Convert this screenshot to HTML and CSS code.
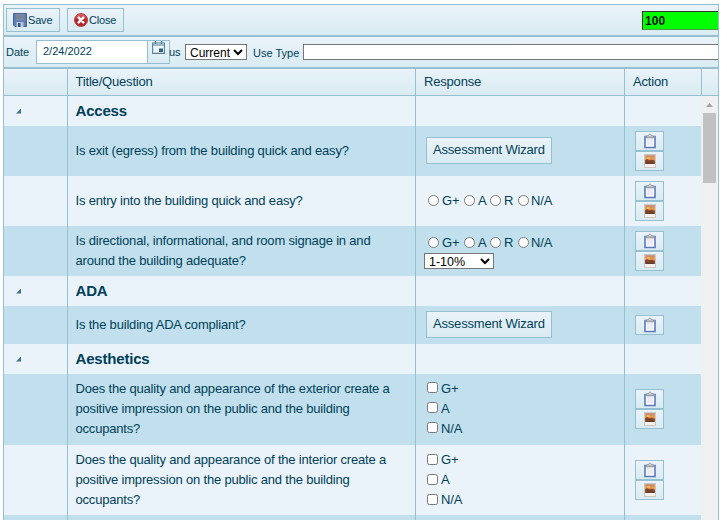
FILE: index.html
```html
<!DOCTYPE html>
<html lang="en">
<head>
<meta charset="utf-8">
<title>Assessment</title>
<link rel="stylesheet" href="styles.css">
</head>
<body>
<svg width="0" height="0" class="defs" aria-hidden="true">
  <defs>
    <linearGradient id="sky" x1="0" y1="0" x2="0" y2="1">
      <stop offset="0" stop-color="#b9836a"/><stop offset=".45" stop-color="#f39a45"/><stop offset=".6" stop-color="#b8642f"/><stop offset="1" stop-color="#543229"/>
    </linearGradient>
    <linearGradient id="red" x1="0" y1="0" x2="0" y2="1">
      <stop offset="0" stop-color="#df6a6a"/><stop offset=".5" stop-color="#bf2228"/><stop offset="1" stop-color="#b3262b"/>
    </linearGradient>
  </defs>
  <symbol id="clip" viewBox="0 0 12 16">
    <path d="M1 3.500h10v11H1z" fill="#fafaff" stroke="#5d79bd" stroke-width="1.600"/>
    <path d="M1.500 3.400h9" stroke="#9aa5bd" stroke-width="1.200"/>
    <path d="M3 7h6M3 9h6M3 11h6" stroke="#dcd8ea" stroke-width=".9"/>
    <path d="M2.500 5V3.200L4.500 2.400Q5 1 6 1t1.500 1.400L9.500 3.200V5z" fill="#b3b9ba" stroke="#8c9395" stroke-width=".7"/>
    <circle cx="6" cy="2.400" r=".7" fill="#eef3f5"/>
  </symbol>
  <symbol id="photo" viewBox="0 0 12 14">
    <rect x=".5" y=".5" width="11" height="13" fill="#f6efec" stroke="#c9c6c4"/>
    <rect x="1.200" y="1.200" width="9.600" height="8.800" fill="url(#sky)"/>
    <path d="M1.200 6l2-1 2 1.500 2-.8 3.600 1.300v1.500H1.200z" fill="#6b3a28" opacity=".7"/>
    <path d="M3 4h3" stroke="#ffd071"/>
  </symbol>
</svg>
<div class="panel">
  <div class="bar tools">
    <button class="btn save"><svg width="14" height="14" viewBox="0 0 14 14"><path d="M.5.5h13v13H2L.5 12z" fill="#5f7eb9" stroke="#45619b"/><path d="M3 1h8v6H3z" fill="#86919f"/><path d="M3 3h8M3 5h8" stroke="#6c7889"/><path d="M3.500 9h7v5h-7z" fill="#b9c5d5"/><path d="M5 10h2.500v4H5z" fill="#3c5689"/></svg>Save</button>
    <button class="btn close"><svg width="14" height="14" viewBox="0 0 14 14"><circle cx="7" cy="7" r="6.500" fill="url(#red)" stroke="#b5474b"/><path d="M4.700 4.700l4.600 4.600m0-4.600l-4.600 4.600" stroke="#fff" stroke-width="2.500" stroke-linecap="round"/></svg>Close</button>
    <div class="score">100</div>
  </div>
  <div class="bar filters">
    <span class="lbl date-lbl">Date</span>
    <div class="date"><span class="date-val">2/24/2022</span><span class="date-ico"><svg width="13" height="13" viewBox="0 0 13 13"><path d="M.6 2h11.800v10.400H.6z" fill="#edf5f9" stroke="#56809a" stroke-width="1.100"/><path d="M0 4h13" stroke="#56809a"/><path d="M3.500 0v3M9.500 0v3" stroke="#56809a" stroke-width="1.400"/><path d="M7 7.500h4v3.500H7z" fill="#2f6280"/></svg></span></div>
    <span class="lbl us">us</span>
    <select class="sel current"><option>Current</option></select>
    <span class="lbl use">Use Type</span>
    <div class="usebox"></div>
  </div>
  <div class="row head"><div class="c"></div><div class="c">Title/Question</div><div class="c">Response</div><div class="c">Action</div><div class="h-end"></div></div>
  <div class="body">
    <div class="rows">
      <div class="row group"><div class="c"><i class="tri"></i></div><div class="c">Access</div><div class="c"></div><div class="c"></div></div>
      <div class="row dark h50"><div class="c"></div><div class="c">Is exit (egress) from the building quick and easy?</div><div class="c"><button class="btn wiz">Assessment Wizard</button></div><div class="c act"><span class="ib"><svg width="12" height="16"><use href="#clip"/></svg></span><span class="ib"><svg width="12" height="14"><use href="#photo"/></svg></span></div></div>
      <div class="row h50"><div class="c"></div><div class="c">Is entry into the building quick and easy?</div><div class="c"><div class="radios"><label class="r1"><input type="radio">G+</label><label class="r2"><input type="radio">A</label><label class="r3"><input type="radio">R</label><label class="r4"><input type="radio">N/A</label></div></div><div class="c act"><span class="ib"><svg width="12" height="16"><use href="#clip"/></svg></span><span class="ib"><svg width="12" height="14"><use href="#photo"/></svg></span></div></div>
      <div class="row dark h50"><div class="c"></div><div class="c">Is directional, informational, and room signage in and<br>around the building adequate?</div><div class="c"><div class="radios"><label class="r1"><input type="radio">G+</label><label class="r2"><input type="radio">A</label><label class="r3"><input type="radio">R</label><label class="r4"><input type="radio">N/A</label></div><select class="sel pct"><option>1-10%</option></select></div><div class="c act"><span class="ib"><svg width="12" height="16"><use href="#clip"/></svg></span><span class="ib"><svg width="12" height="14"><use href="#photo"/></svg></span></div></div>
      <div class="row group"><div class="c"><i class="tri"></i></div><div class="c">ADA</div><div class="c"></div><div class="c"></div></div>
      <div class="row dark h38"><div class="c"></div><div class="c">Is the building ADA compliant?</div><div class="c"><button class="btn wiz">Assessment Wizard</button></div><div class="c act"><span class="ib"><svg width="12" height="16"><use href="#clip"/></svg></span></div></div>
      <div class="row group"><div class="c"><i class="tri"></i></div><div class="c">Aesthetics</div><div class="c"></div><div class="c"></div></div>
      <div class="row dark h71"><div class="c"></div><div class="c">Does the quality and appearance of the exterior create a<br>positive impression on the public and the building<br>occupants?</div><div class="c"><div class="checks"><label><input type="checkbox">G+</label><label><input type="checkbox">A</label><label><input type="checkbox">N/A</label></div></div><div class="c act"><span class="ib"><svg width="12" height="16"><use href="#clip"/></svg></span><span class="ib"><svg width="12" height="14"><use href="#photo"/></svg></span></div></div>
      <div class="row h70"><div class="c"></div><div class="c">Does the quality and appearance of the interior create a<br>positive impression on the public and the building<br>occupants?</div><div class="c"><div class="checks"><label><input type="checkbox">G+</label><label><input type="checkbox">A</label><label><input type="checkbox">N/A</label></div></div><div class="c act"><span class="ib"><svg width="12" height="16"><use href="#clip"/></svg></span><span class="ib"><svg width="12" height="14"><use href="#photo"/></svg></span></div></div>
      <div class="row dark last"><div class="c"></div><div class="c"></div><div class="c"></div><div class="c"></div></div>
    </div>
    <div class="scroll"><i class="up"></i><div class="thumb"></div></div>
  </div>
</div>
</body>
</html>
```
FILE: styles.css
```css
* { box-sizing: border-box; }
body { margin: 0; height: 520px; overflow: hidden; background: #fff; color: #003f59; font: 13px/20px "Liberation Sans", Arial, sans-serif; letter-spacing: -.185px; }
.defs { position: absolute; }
.panel { margin: 4px 0 0 3px; width: 716px; height: 516px; border: 1px solid #94c0d2; border-bottom: 0; }
.bar { display: flex; overflow: hidden; background: linear-gradient(#eaf3f9, #d9ebf2); border-bottom: 2px solid #94c0d2; }
.tools { height: 32px; padding: 3px 0 0 2px; }
.filters { height: 32px; padding-top: 3px; }
.btn { display: flex; align-items: center; margin: 0; padding: 0; border: 1px solid #94c0d2; background: linear-gradient(#eaf3f9, #d9ebf2); color: #003f59; font: 11px/22px "Liberation Sans", Arial, sans-serif; letter-spacing: -.185px; white-space: nowrap; }
.save, .close { height: 24px; }
.save { width: 54px; padding-left: 6px; gap: 1px; }
.close { width: 57px; margin-left: 7px; padding-left: 6px; gap: 1px; }
.score { margin: 3px 0 0 auto; width: 76px; height: 19px; padding-left: 2px; background: #0f0; border: 1px solid #333; border-right: 0; border-bottom-color: #4c9a4c; color: #111; font-weight: bold; font-size: 12px; line-height: 18px; letter-spacing: .1px; }
.lbl { font-size: 11px; line-height: 24px; white-space: nowrap; letter-spacing: 0; }
.date-lbl { width: 32px; padding-left: 2px; flex: none; }
.date { display: flex; width: 134px; height: 24px; flex: none; border: 1px solid #94c0d2; background: #fff; }
.date-val { width: 110px; padding-left: 6px; font-size: 11px; line-height: 21px; letter-spacing: 0; }
.date-ico { width: 22px; border-left: 1px solid #94c0d2; background: linear-gradient(#eaf3f9, #d9ebf2); padding-left: 4px; line-height: 0; }
.us { width: 16px; margin-left: -1px; }
.sel { margin: 0; padding: 0; border: 1px solid #767676; border-radius: 0; background: #fff; color: #000; height: 16px; font: 12px "Liberation Sans", Arial, sans-serif; letter-spacing: 0; }
.current { width: 62px; margin-top: 4px; flex: none; }
.use { width: 56px; padding-left: 6px; line-height: 26px; }
.usebox { flex: 1; height: 16px; margin-top: 4px; background: #fff; border: 1px solid #767676; border-right: 0; }
.row { display: grid; grid-template-columns: 64px 348px 209px 76px; background: #eaf3fa; height: 30px; }
.c { display: flex; flex-wrap: wrap; align-content: center; align-items: center; padding-left: 7.5px; border-right: 1px solid #94c0d2; white-space: nowrap; min-width: 0; }
.c:nth-child(3), .c:nth-child(4) { padding-left: 8px; }
.c:nth-child(4) { border-right: 0; }
.head { grid-template-columns: 64px 348px 209px 77px 1fr; height: 27px; border-bottom: 1px solid #94c0d2; background: linear-gradient(#eaf3f9, #d9ebf2); }
.head .c:nth-child(4) { border-right: 1px solid #94c0d2; }
.body { display: flex; height: 424px; overflow: hidden; }
.rows { width: 697px; }
.group { font-weight: bold; font-size: 15px; }
.dark { background: #c1dfec; }
.h50 { height: 50px; }
.h38 { height: 38px; }
.h71 { height: 71px; }
.h70 { height: 70px; }
.h71 .c:not(.act) { padding-bottom: 2px; }
.last { height: 9px; }
.tri { width: 5px; height: 5px; margin: 0 0 0 4.500px; background: #3f7187; clip-path: polygon(100% 0, 100% 100%, 0 100%); }
.wiz { width: 126px; height: 27px; margin: -2px 0 0 2px; padding-left: 6px; font-size: 13px; }
.c.act { flex-direction: column; flex-wrap: nowrap; justify-content: center; align-items: flex-start; padding-left: 10px; }
.h71 .act { padding-bottom: 1px; }
.ib { display: flex; align-items: center; justify-content: center; width: 29px; height: 20px; border: 1px solid #94c0d2; background: linear-gradient(#eaf3f9, #d9ebf2); }
input { width: 11px; height: 11px; margin: 0; flex: none; }
.radios { display: flex; width: 190px; padding-left: 4px; }
.radios label { display: flex; align-items: center; gap: 3px; }
.radios input { margin-top: -1px; }
.r1 { width: 36px; }
.r2 { width: 26px; }
.r3 { width: 28px; }
.radios .r4 { gap: 2px; }
.pct { width: 70px; font-size: 12.500px; }
.checks { padding-left: 3px; }
.checks label { display: flex; align-items: center; gap: 3px; height: 20px; }
.checks input { margin-top: -2px; }
.scroll { width: 17px; height: 424px; background: #f0f0f0; padding: 7px 2px 0; }
.up { display: block; width: 7px; height: 4px; margin: 0 auto 6px; background: #a3a3a3; clip-path: polygon(50% 0, 100% 100%, 0 100%); }
.thumb { height: 70px; background: #c1c1c1; }
```
